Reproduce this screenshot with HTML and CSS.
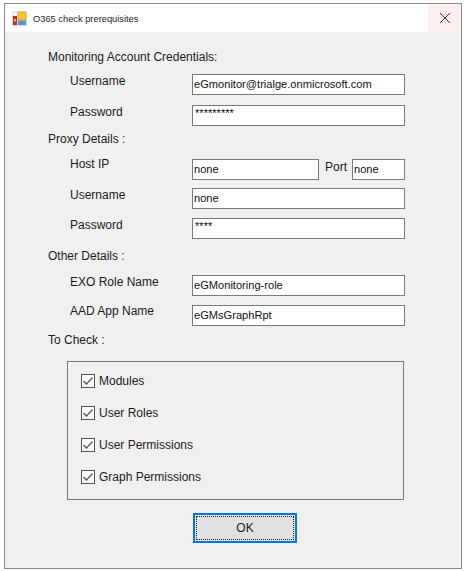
FILE: index.html
```html
<!DOCTYPE html>
<html lang="en">
<head>
  <meta charset="UTF-8">
  <title>O365 check prerequisites</title>
  <link rel="stylesheet" href="styles.css">
</head>
<body>
  <div class="window">
    <div class="titlebar">
      <svg class="app-icon" width="15" height="15" viewBox="0 0 15 15">
        <rect x="0" y="0" width="15" height="15" fill="#dedede"/>
        <rect x="1" y="1" width="4" height="4" fill="#f4f4f4"/>
        <rect x="6" y="1" width="8" height="8" fill="#f2c230" stroke="#dca21c" stroke-width="0.6"/>
        <rect x="1" y="5" width="4" height="9" fill="#c5281f"/>
        <rect x="2.2" y="8" width="1.6" height="2.5" fill="#f3d5d0"/>
        <rect x="6" y="9.5" width="8" height="4.5" fill="#5a8fd8"/>
      </svg>
      <span class="title">O365 check prerequisites</span>
      <div class="close">
        <svg width="12" height="12" viewBox="0 0 12 12"><path d="M1 1 L11 11 M11 1 L1 11" stroke="#333" stroke-width="1" fill="none"/></svg>
      </div>
    </div>

    <div class="content">
      <div class="heading">Monitoring Account Credentials:</div>
      <div class="row row-user">
        <label class="row-label">Username</label>
        <div class="input">eGmonitor@trialge.onmicrosoft.com</div>
      </div>
      <div class="row row-pass">
        <label class="row-label">Password</label>
        <div class="input input-secret">*********</div>
      </div>

      <div class="heading heading-proxy">Proxy Details :</div>
      <div class="row row-host">
        <label class="row-label">Host IP</label>
        <div class="input input-host">none</div>
        <label class="port-label">Port</label>
        <div class="input input-port">none</div>
      </div>
      <div class="row row-proxy-user">
        <label class="row-label">Username</label>
        <div class="input">none</div>
      </div>
      <div class="row row-pass-2">
        <label class="row-label">Password</label>
        <div class="input input-secret">****</div>
      </div>

      <div class="heading heading-other">Other Details :</div>
      <div class="row row-exo">
        <label class="row-label">EXO Role Name</label>
        <div class="input">eGMonitoring-role</div>
      </div>
      <div class="row row-aad">
        <label class="row-label">AAD App Name</label>
        <div class="input">eGMsGraphRpt</div>
      </div>

      <div class="heading heading-check">To Check :</div>
      <div class="check-box">
        <div class="check"><span class="tick"><svg width="12" height="12" viewBox="0 0 12 12"><path d="M1.5 6 L4.5 9 L10.5 2.5" stroke="#555" stroke-width="1.3" fill="none"/></svg></span>Modules</div>
        <div class="check"><span class="tick"><svg width="12" height="12" viewBox="0 0 12 12"><path d="M1.5 6 L4.5 9 L10.5 2.5" stroke="#555" stroke-width="1.3" fill="none"/></svg></span>User Roles</div>
        <div class="check"><span class="tick"><svg width="12" height="12" viewBox="0 0 12 12"><path d="M1.5 6 L4.5 9 L10.5 2.5" stroke="#555" stroke-width="1.3" fill="none"/></svg></span>User Permissions</div>
        <div class="check"><span class="tick"><svg width="12" height="12" viewBox="0 0 12 12"><path d="M1.5 6 L4.5 9 L10.5 2.5" stroke="#555" stroke-width="1.3" fill="none"/></svg></span>Graph Permissions</div>
      </div>

      <div class="actions">
        <div class="ok-button"><div class="ok-inner">OK</div></div>
      </div>
    </div>
  </div>
</body>
</html>
```

FILE: styles.css
```css
* {
  box-sizing: border-box;
}

body {
  margin: 0;
  padding: 3px 3px 2px 4px;
  background: #fff;
  font-family: "Liberation Sans", Arial, sans-serif;
  font-size: 12px;
  color: #1c1c1c;
}

/* Window frame */
.window {
  height: 566px;
  border: 1px solid #8a8a8a;
  background: #f0f0f0;
}

.titlebar {
  display: flex;
  align-items: center;
  height: 28px;
  background: #fff;
  padding-left: 7px;
}

.app-icon {
  flex: none;
  margin-top: 1px;
}

.title {
  flex: 1;
  margin-left: 6px;
  margin-top: 1px;
  font-size: 9.3px;
}

.close {
  display: flex;
  align-items: center;
  justify-content: center;
  width: 33px;
  height: 28px;
  background: #fdeeee;
}

/* Form */
.content {
  padding: 17px 0 0 43px;
}

.heading {
  line-height: 16px;
}

.heading-proxy {
  margin-top: 5px;
}

.heading-other {
  margin-top: 9px;
}

.heading-check {
  margin-top: 6px;
}

.row {
  display: flex;
  align-items: flex-start;
}

.row-user {
  margin-top: 8px;
}

.row-pass {
  margin-top: 9px;
}

.row-host {
  margin-top: 9px;
}

.row-host .input {
  margin-top: 3px;
}

.row-proxy-user {
  margin-top: 7px;
}

.row-pass-2 {
  margin-top: 8px;
}

.row-exo {
  margin-top: 10px;
}

.row-aad {
  margin-top: 7px;
}

.row-aad .input {
  margin-top: 2px;
}

.row-label {
  width: 144px;
  padding-left: 22px;
  line-height: 16px;
}

.input {
  width: 213px;
  height: 21px;
  margin-top: 1px;
  border: 1px solid #7a7a7a;
  background: #fff;
  padding-left: 1px;
  line-height: 19px;
  font-size: 11.1px;
  color: #111;
  white-space: nowrap;
}

.input-secret {
  padding-left: 2px;
  line-height: 15px;
}

.input-host {
  width: 127px;
}

.port-label {
  width: 33px;
  margin-top: 3px;
  padding-left: 6px;
  line-height: 16px;
}

.input-port {
  width: 53px;
}

/* To check group */
.check-box {
  width: 337px;
  height: 139px;
  margin: 13px 0 0 19px;
  padding-top: 3px;
  border: 1px solid #7a7a7a;
}

.check {
  display: flex;
  align-items: center;
  height: 32px;
  padding-left: 13px;
}

.tick {
  display: flex;
  align-items: center;
  justify-content: center;
  width: 14px;
  height: 14px;
  margin-right: 4px;
  border: 1px solid #555;
  background: #fff;
}

/* Button */
.actions {
  display: flex;
  padding: 13px 0 0 145px;
}

.ok-button {
  width: 104px;
  height: 30px;
  border: 2px solid #0078d7;
  background: #e1e1e1;
  padding: 1px;
}

.ok-inner {
  height: 24px;
  border: 1px dotted #222;
  text-align: center;
  line-height: 22px;
}
```
